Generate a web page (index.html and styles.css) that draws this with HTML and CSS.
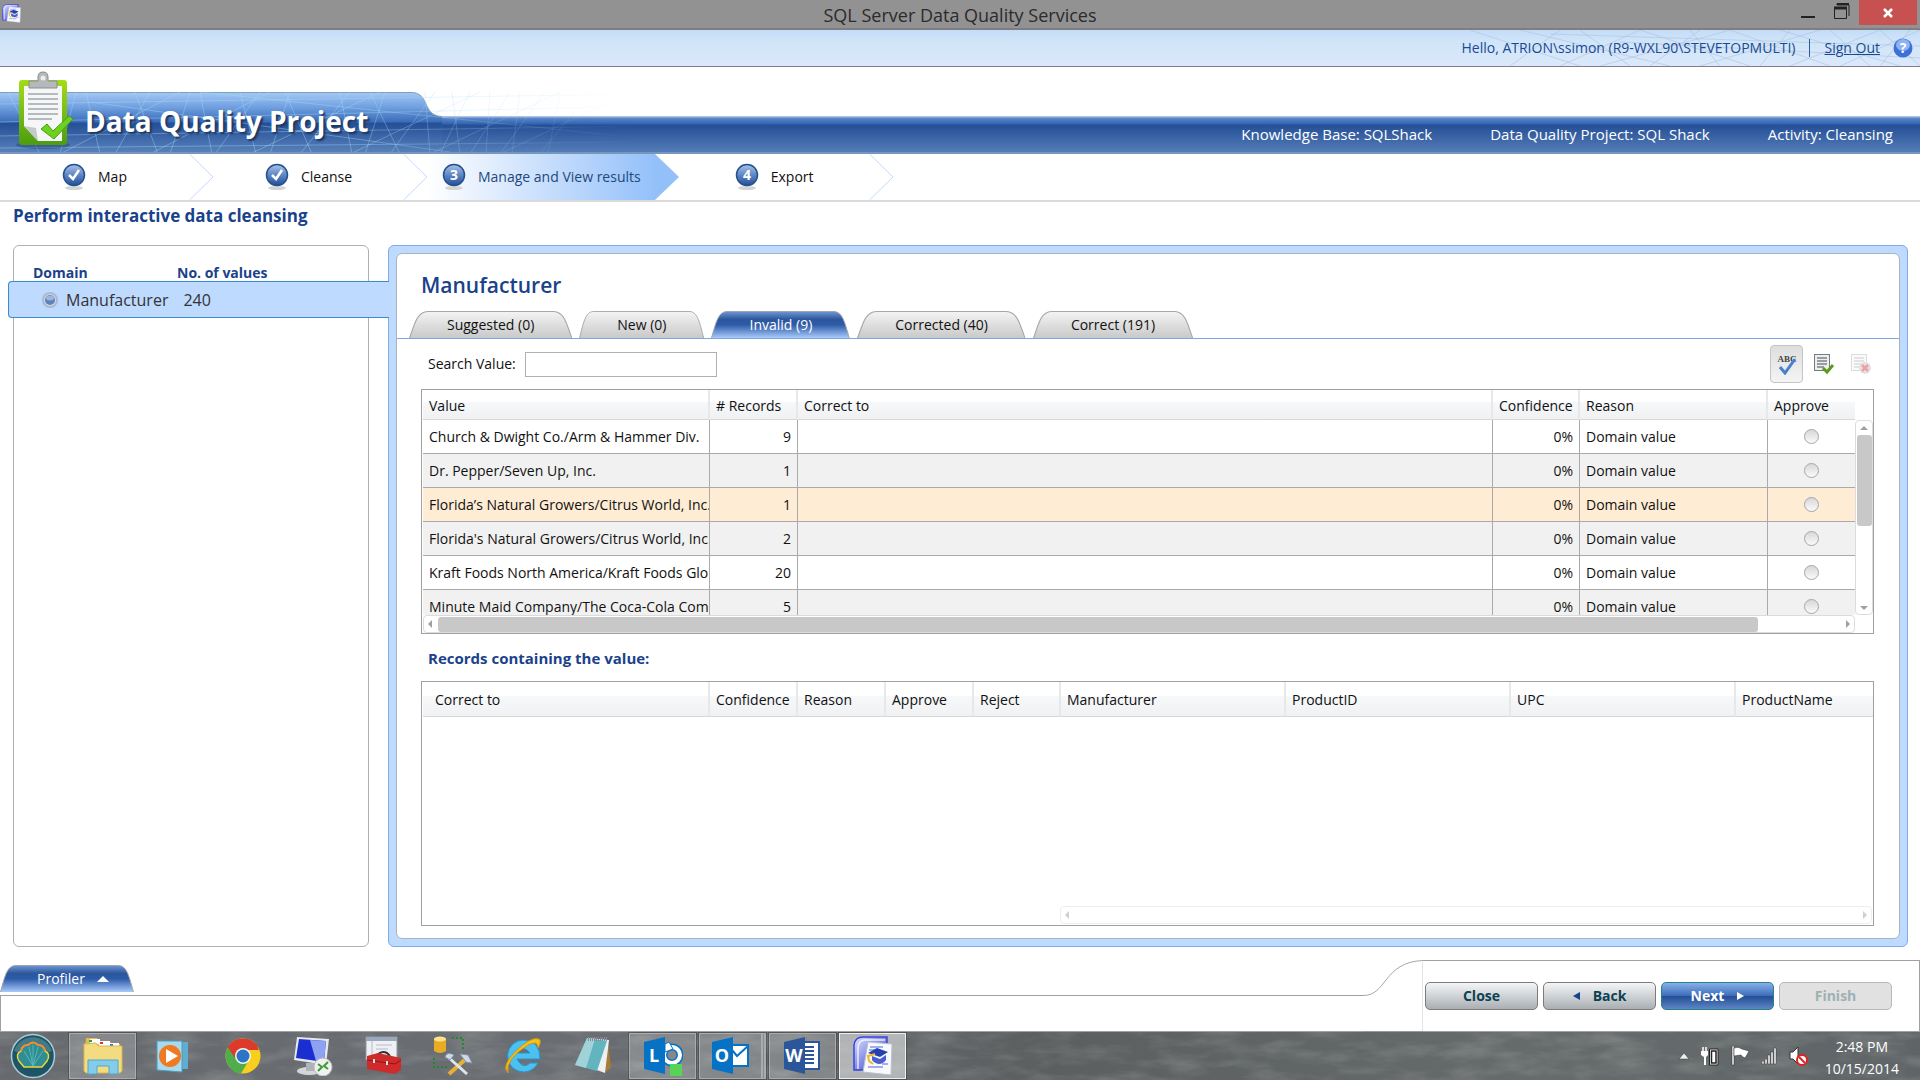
FILE: index.html
```html
<!DOCTYPE html>
<html lang="en">
<head>
  <meta charset="UTF-8" />
  <meta name="viewport" content="width=device-width, initial-scale=1.0"/>
  <title>SQL Server Data Quality Services</title>
  <link rel="stylesheet" href="styles.css">
</head>
<body>
  <!-- shared shapes -->
  <svg class="defs" width="0" height="0" aria-hidden="true">
    <defs>
      <linearGradient id="gGray" x1="0" y1="0" x2="0" y2="1">
        <stop offset="0" stop-color="#f4f4f4"/><stop offset="1" stop-color="#c9c9c9"/>
      </linearGradient>
      <linearGradient id="gBlue" x1="0" y1="0" x2="0" y2="1">
        <stop offset="0" stop-color="#6d96d2"/><stop offset=".3" stop-color="#2c579d"/>
        <stop offset=".5" stop-color="#2d5ba8"/><stop offset="1" stop-color="#a9cbfa"/>
      </linearGradient>
      <linearGradient id="gBall" x1="0" y1="0" x2="0" y2="1">
        <stop offset="0" stop-color="#a9c3e8"/><stop offset=".5" stop-color="#5f86c4"/><stop offset="1" stop-color="#234f97"/>
      </linearGradient>
      <linearGradient id="gBanner" x1="0" y1="0" x2="0" y2="1">
        <stop offset="0" stop-color="#a3c8f5"/><stop offset=".25" stop-color="#6f9fdf"/><stop offset=".49" stop-color="#3c6db9"/>
        <stop offset=".52" stop-color="#254f96"/><stop offset="1" stop-color="#5780bb"/>
      </linearGradient>
      <linearGradient id="gFolder" x1="0" y1="0" x2="1" y2="1">
        <stop offset="0" stop-color="#dfe4ff"/><stop offset="1" stop-color="#2733cc"/>
      </linearGradient>
      <linearGradient id="gFade"><stop offset=".55" stop-color="#fff"/><stop offset="1" stop-color="#000"/></linearGradient>
      <symbol id="tabGray" viewBox="0 0 140 27" preserveAspectRatio="none">
        <path d="M.5 27C5 12 7 1 16 .5H124C133 1 135 12 139.500 27" fill="url(#gGray)" stroke="#a8a8a8"/>
      </symbol>
      <symbol id="tabBlue" viewBox="0 0 140 27" preserveAspectRatio="none">
        <path d="M.5 27C5 12 7 1 16 .5H124C133 1 135 12 139.500 27" fill="url(#gBlue)" stroke="#a0a4aa"/>
      </symbol>
      <symbol id="ball" viewBox="0 0 24 28">
        <ellipse cx="12" cy="25" rx="9" ry="2" fill="#d4d4d4"/>
        <circle cx="12" cy="12" r="10.500" fill="url(#gBall)" stroke="#24508f" stroke-width="1.500"/>
      </symbol>
      <symbol id="dqs" viewBox="0 0 40 40">
        <path d="M1 34V9Q2 1 10 1H34V34Z" fill="url(#gFolder)" stroke="#3a46dc" stroke-width="1.500"/>
        <path d="M5 33V11Q6 4 12 4H32" fill="none" stroke="#fff" stroke-opacity=".8" stroke-width="1.500"/>
        <path d="M15 6L39 8L38 39L10 36Z" fill="#f8f9fd" stroke="#b8bfd0"/>
        <path d="M17 11H30M16 14H22M15 31H30M29 28H35" stroke="#a3aef0" stroke-width="2"/>
        <path d="M15 17L24 12L35 16L27 21Z" fill="#2540b0"/>
        <path d="M19 20L27 23L33 19V24Q30 28 26 28Q21 27 19 24Z" fill="#4a5ed0"/>
        <path d="M22 18L15 20L16 25L20 28" fill="none" stroke="#f0b429" stroke-width="2"/>
      </symbol>
    </defs>
  </svg>

  <header class="titlebar">
    <svg class="app-icon" width="19" height="19"><use href="#dqs"/></svg>
    <span class="window-title">SQL Server Data Quality Services</span>
    <div class="window-buttons">
      <button class="win-btn" aria-label="Minimize"><svg width="16" height="20"><path d="M1 17H15" stroke="#222" stroke-width="2"/></svg></button>
      <button class="win-btn" aria-label="Restore"><svg width="16" height="20"><path d="M3 3.500V5H15V16" fill="none" stroke="#222" stroke-width="1"/><path d="M3 4H15" stroke="#222" stroke-width="2"/><path d="M.5 7V18.500H12.500V7" fill="none" stroke="#222"/><path d="M0 8H13" stroke="#222" stroke-width="3"/></svg></button>
      <button class="win-btn close" aria-label="Close window"><svg width="12" height="12"><path d="M2 2L10 10M10 2L2 10" stroke="#fff" stroke-width="2.500"/></svg></button>
    </div>
  </header>

  <div class="userbar">
    <svg class="userbar-lines" width="470" height="36" aria-hidden="true">
      <path d="M20 0L130 36M60 36L110 0M70 0L220 36M110 36L190 0M130 0L180 36M150 36L280 0M190 0L300 36M200 36L250 0M240 0L270 36M250 36L370 0M280 0L380 36M310 36L340 0M330 0L450 36M340 36L430 0M380 0L420 36M390 36L470 0M430 0L470 36M430 36L460 0M170 12L470 28M100 4L470 16" stroke="#a9bfdc" stroke-opacity=".55" fill="none"/>
    </svg>
    <span>Hello, ATRION\ssimon (R9-WXL90\STEVETOPMULTI)</span>
    <span class="divider"></span>
    <a href="#">Sign Out</a>
    <svg class="help" width="20" height="20"><circle cx="10" cy="10" r="9.500" fill="#3d6fd6"/><ellipse cx="10" cy="7" rx="7" ry="6" fill="#8fb2f2"/><text x="10" y="15" text-anchor="middle" class="help-mark">?</text></svg>
  </div>

  <div class="banner">
    <svg class="banner-art" width="640" height="62" aria-hidden="true">
      <mask id="fade"><rect width="640" height="62" fill="url(#gFade)"/></mask>
      <path d="M0 .5H412C430 1 422 24 442 24.500V60H0Z" fill="url(#gBanner)"/>
      <path d="M0 .5H412C430 1 422 24 442 24.500" fill="none" stroke="#7ba3b8"/>
      <g mask="url(#fade)" stroke="#a5dcf5" stroke-opacity=".4" fill="none">
        <path d="M0 12L640 2M0 30L640 14M0 44L640 34M0 56L640 50M90 10L450 60M200 0L620 44"/>
        <path d="M8 0L40 62M60 62L76 0M86 0L100 62M115 62L150 0M135 0L158 62M170 62L190 0M200 0L212 62M215 62L260 0M240 0L256 62M270 62L290 0M285 0L312 62M300 62L350 0M340 0L352 62M365 62L385 0M370 0L400 62M390 62L435 0M425 0L430 62M440 62L470 0M452 0L460 62M470 62L510 0M490 0L486 62M500 62L545 0M520 0L512 62M540 62L590 0M560 0L548 62"/>
        <path d="M60 62L180 0M150 62L270 0M250 62L380 0M350 62L480 0M430 62L560 0M500 62L630 0"/>
      </g>
      <path d="M0 61H640" stroke="#7597bd" stroke-width="2"/>
    </svg>
    <div class="banner-title">
      <svg width="62" height="80" viewBox="0 0 62 80" aria-hidden="true">
        <defs><linearGradient id="gClip" x1="0" y1="0" x2="0" y2="1"><stop offset="0" stop-color="#a4dc18"/><stop offset="1" stop-color="#4d9c10"/></linearGradient></defs>
        <ellipse cx="29" cy="74" rx="27" ry="4" fill="#1d3c70" fill-opacity=".4"/>
        <rect x="5" y="9" width="48" height="65" rx="3" fill="url(#gClip)"/>
        <path d="M10 15H48V70H24L10 55Z" fill="#f5f6f7"/><path d="M10 55L22 57L24 70Z" fill="#c4c9cc"/>
        <path d="M14 23H44M14 28H44M14 33H44M14 38H44M14 43H44M14 48H38" stroke="#a0a6ab" stroke-width="1.500"/>
        <path d="M15 17V10H24V6Q24 1 29 1T34 6V10H43V17Z" fill="#b5b9bc" stroke="#888d91"/><circle cx="29" cy="7" r="2.500" fill="#eee"/>
        <path d="M27 58L33 53L39 60L55 45L59 48L40 68Z" fill="#6ed01f" stroke="#46a012"/>
      </svg>
      <h1>Data Quality Project</h1>
    </div>
    <div class="banner-info">
      <span>Knowledge Base: SQLShack</span>
      <span>Data Quality Project: SQL Shack</span>
      <span>Activity: Cleansing</span>
    </div>
  </div>

  <nav class="steps">
    <div class="step"><svg width="24" height="28"><use href="#ball"/><path d="M7 12L11 16L17 7" fill="none" stroke="#fff" stroke-width="2.500"/></svg>Map</div>
    <svg class="chevron" width="25" height="46"><path d="M.5 0L24 23L.5 46" fill="none" stroke="#bfdcff"/></svg>
    <div class="step"><svg width="24" height="28"><use href="#ball"/><path d="M7 12L11 16L17 7" fill="none" stroke="#fff" stroke-width="2.500"/></svg>Cleanse</div>
    <svg class="chevron" width="25" height="46"><path d="M.5 0L24 23L.5 46" fill="none" stroke="#bfdcff"/></svg>
    <div class="step active"><svg width="24" height="28"><use href="#ball"/><text x="12" y="17" text-anchor="middle" class="num">3</text></svg>Manage and View results</div>
    <svg class="chevron" width="25" height="46"><path d="M0 0L24 23L0 46Z" fill="#94c0fa"/></svg>
    <div class="step"><svg width="24" height="28"><use href="#ball"/><text x="12" y="17" text-anchor="middle" class="num">4</text></svg>Export</div>
    <svg class="chevron" width="25" height="46"><path d="M.5 0L24 23L.5 46" fill="none" stroke="#bfdcff"/></svg>
  </nav>

  <main>
    <h2 class="page-heading">Perform interactive data cleansing</h2>
    <div class="workspace">
      <aside class="domains">
        <div class="domain-head"><span>Domain</span><span>No. of values</span></div>
        <div class="domain-row">
          <svg width="18" height="18"><circle cx="9" cy="9" r="8" fill="#a9b9d0"/><circle cx="9" cy="9" r="6" fill="#d3dae6"/><circle cx="9" cy="9" r="5" fill="#5f82bd"/><ellipse cx="9" cy="7" rx="4" ry="2.500" fill="#9eb6dc"/></svg>
          <span>Manufacturer</span><span>240</span>
        </div>
      </aside>

      <section class="detail">
        <div class="detail-inner">
          <h2>Manufacturer</h2>
          <div class="tabs" role="tablist">
            <button class="tab" role="tab"><svg><use href="#tabGray"/></svg><span>Suggested (0)</span></button>
            <button class="tab" role="tab"><svg><use href="#tabGray"/></svg><span>New (0)</span></button>
            <button class="tab selected" role="tab" aria-selected="true"><svg><use href="#tabBlue"/></svg><span>Invalid (9)</span></button>
            <button class="tab" role="tab"><svg><use href="#tabGray"/></svg><span>Corrected (40)</span></button>
            <button class="tab" role="tab"><svg><use href="#tabGray"/></svg><span>Correct (191)</span></button>
          </div>

          <div class="toolbar">
            <label for="search">Search Value:</label>
            <input type="text" id="search" />
            <div class="tools">
              <button class="tool pressed" aria-label="Spell check"><svg width="22" height="22"><text x="11" y="9" text-anchor="middle" class="abc">ABC</text><path d="M4 14L9 20L19 6" fill="none" stroke="#4a7fd0" stroke-width="3"/></svg></button>
              <button class="tool" aria-label="Approve all"><svg width="22" height="22"><rect x="1.500" y="1.500" width="15" height="16" fill="#eceeef" stroke="#777c80"/><path d="M4 5H14M4 8H14M4 11H14M4 14H11" stroke="#7d8287" stroke-width="1.500"/><path d="M10 15L14 19L20 12" fill="none" stroke="#5d9a1e" stroke-width="3"/></svg></button>
              <button class="tool" aria-label="Reject all" disabled><svg width="22" height="22"><rect x="1.500" y="1.500" width="15" height="16" fill="#fafafa" stroke="#ddd"/><path d="M4 5H14M4 8H14M4 11H14M4 14H9" stroke="#ddd" stroke-width="1.500"/><circle cx="15" cy="15" r="6" fill="#e2e2e2"/><path d="M12 12L18 18M18 12L12 18" stroke="#f0a0a0" stroke-width="2.500"/></svg></button>
            </div>
          </div>

          <div class="grid">
            <div class="grid-view">
              <table class="values">
                <colgroup><col class="w-value"><col class="w-small"><col><col class="w-flag"><col class="w-reason"><col class="w-flag"></colgroup>
                <thead>
                  <tr><th>Value</th><th># Records</th><th>Correct to</th><th>Confidence</th><th>Reason</th><th>Approve</th></tr>
                </thead>
                <tbody>
                  <tr><td>Church &amp; Dwight Co./Arm &amp; Hammer Div.</td><td class="num-cell">9</td><td></td><td class="num-cell">0%</td><td>Domain value</td><td class="radio-cell"><input type="radio" name="a1" aria-label="Approve"></td></tr>
                  <tr><td>Dr. Pepper/Seven Up, Inc.</td><td class="num-cell">1</td><td></td><td class="num-cell">0%</td><td>Domain value</td><td class="radio-cell"><input type="radio" name="a2" aria-label="Approve"></td></tr>
                  <tr class="current"><td>Florida’s Natural Growers/Citrus World, Inc.</td><td class="num-cell">1</td><td></td><td class="num-cell">0%</td><td>Domain value</td><td class="radio-cell"><input type="radio" name="a3" aria-label="Approve"></td></tr>
                  <tr><td>Florida's Natural Growers/Citrus World, Inc.</td><td class="num-cell">2</td><td></td><td class="num-cell">0%</td><td>Domain value</td><td class="radio-cell"><input type="radio" name="a4" aria-label="Approve"></td></tr>
                  <tr><td>Kraft Foods North America/Kraft Foods Global</td><td class="num-cell">20</td><td></td><td class="num-cell">0%</td><td>Domain value</td><td class="radio-cell"><input type="radio" name="a5" aria-label="Approve"></td></tr>
                  <tr><td>Minute Maid Company/The Coca-Cola Company</td><td class="num-cell">5</td><td></td><td class="num-cell">0%</td><td>Domain value</td><td class="radio-cell"><input type="radio" name="a6" aria-label="Approve"></td></tr>
                </tbody>
              </table>
            </div>
            <div class="vscroll"><span class="arrow up"></span><span class="thumb"></span><span class="arrow down"></span></div>
            <div class="hscroll"><span class="arrow left"></span><span class="thumb"></span><span class="arrow right"></span></div>
          </div>

          <h3>Records containing the value:</h3>
          <div class="records">
            <table class="values tall">
              <colgroup><col class="w-value"><col class="w-small"><col class="w-small"><col class="w-small"><col class="w-flag"><col class="w-field"><col class="w-field"><col class="w-field"><col></colgroup>
              <thead>
                <tr><th>Correct to</th><th>Confidence</th><th>Reason</th><th>Approve</th><th>Reject</th><th>Manufacturer</th><th>ProductID</th><th>UPC</th><th>ProductName</th></tr>
              </thead>
            </table>
            <div class="hscroll idle"><span class="arrow left"></span><span class="arrow right"></span></div>
          </div>
        </div>
      </section>
    </div>
  </main>

  <footer class="footer">
    <div class="footer-left">
      <button class="tab selected profiler"><svg><use href="#tabBlue"/></svg><span>Profiler</span><span class="tri-up"></span></button>
      <div class="footer-box"></div>
    </div>
    <svg class="footer-curve" width="60" height="72" aria-hidden="true"><path d="M0 35.500C24 36 20 2 60 .5" fill="none" stroke="#a6a6a6"/><path d="M59.500 2V71" stroke="#e4e4e4"/><path d="M0 71.500H60" stroke="#999"/></svg>
    <div class="footer-actions">
      <button class="btn">Close</button>
      <button class="btn"><span class="tri-left"></span>Back</button>
      <button class="btn primary">Next<span class="tri-right"></span></button>
      <button class="btn" disabled>Finish</button>
    </div>
  </footer>

  <div class="taskbar">
    <svg class="water" width="100%" height="100%" aria-hidden="true">
      <filter id="ripples" x="0" y="0" width="100%" height="100%"><feTurbulence type="fractalNoise" baseFrequency=".02 .07" numOctaves="4" seed="4"/><feColorMatrix values="0 0 0 0 .75  0 0 0 0 .75  0 0 0 0 .74  1.600 0 0 0 -.65"/></filter>
      <rect width="100%" height="100%" filter="url(#ripples)"/>
    </svg>
    <div class="apps">
      <button class="app start" aria-label="Start"><svg width="46" height="46"><circle cx="23" cy="23" r="21.500" fill="#1d5566" stroke="#a9ccd6" stroke-width="1.500"/><path d="M4 18A20 20 0 0 1 42 18Q24 26 4 18" fill="#6b9da8" fill-opacity=".5"/><path d="M14 34L9 28Q5 21 11 18Q12 12 18 12Q23 7 28 12Q34 12 35 18Q41 21 37 28L32 34Z" fill="#2f8d93" stroke="#e8d838" stroke-width="1.500"/><path d="M11 18Q12 12 18 12Q23 7 28 12Q34 12 35 18" fill="none" stroke="#f08a30" stroke-width="2"/><path d="M23 33L14 18M23 33L19 14M23 33V12M23 33L28 14M23 33L33 18" stroke="#56b5b8"/></svg></button>
      <button class="app open" aria-label="File Explorer"><svg width="42" height="40"><path d="M4 2H15L17 5H28L29 8H38V12H3Z" fill="#e2bd53"/><path d="M8 3H18V8H8ZM17 5H28V10H17ZM27 7H37V12H27Z" fill="#fff"/><path d="M7 4H10V6H7Z" fill="#2aa148"/><path d="M18 6H21V8H18Z" fill="#d33"/><path d="M28 8H31V11H28Z" fill="#277dc9"/><path d="M2 8L14 7L16 10H40V35L38 37H4L2 35Z" fill="#f3db80" stroke="#d8b650"/><path d="M6 24H36V38H27V30H15V38H6Z" fill="#83cdea" stroke="#4fa6cf"/></svg></button>
      <button class="app" aria-label="Media Player"><svg width="36" height="36"><path d="M6 4H33V31H6Z" fill="#5faed0"/><path d="M2 3H27V34L2 32Z" fill="#a9d9ec" stroke="#4f9cbf"/><circle cx="15" cy="18" r="11" fill="#f07a22"/><path d="M11 11V25L23 18Z" fill="#fff"/></svg></button>
      <button class="app" aria-label="Chrome"><svg width="36" height="36"><circle cx="18" cy="18" r="17.500" fill="#f9cf1e"/><path d="M18 18L2.800 9.300A17.500 17.500 0 0 1 33.200 9.300H18Z" fill="#dc3a2b"/><path d="M18 18L10.400 13.600L2.800 9.300A17.500 17.500 0 0 0 16 35.400L24 22Z" fill="#4eae49"/><path d="M2.800 9.300A17.500 17.500 0 0 1 34 12H18L10 20Z" fill="#dc3a2b"/><circle cx="18" cy="18" r="8" fill="#f2f2f2"/><circle cx="18" cy="18" r="6.500" fill="#2c74c4"/></svg></button>
      <button class="app" aria-label="Remote Desktop"><svg width="42" height="40"><ellipse cx="17" cy="35" rx="12" ry="4" fill="#d4d7da"/><path d="M14 27H22V35H14Z" fill="#aeb3b8"/><path d="M5 1L37 3L34 29L2 24Z" fill="#e7eaed"/><path d="M7 3L34 5L32 26L4 22Z" fill="#1b2fd0"/><path d="M18 4L34 5L32 26L24 25Z" fill="#8ea2f2"/><circle cx="31" cy="31" r="9" fill="#f0f0f0" stroke="#bbb"/><path d="M26 28L30 31L26 35M36 26L32 30L36 33" fill="none" stroke="#3c9b35" stroke-width="2"/></svg></button>
      <button class="app" aria-label="SQL Server tools"><svg width="38" height="40"><path d="M2 1H33V24H2Z" fill="#eef0f4" stroke="#8d96a6"/><path d="M2 1H33V5H2Z" fill="#9ba8bc"/><path d="M8 5V24M12 9H28M12 13H24" stroke="#b3bbc8"/><path d="M12 20Q20 12 26 20" fill="none" stroke="#333" stroke-width="2"/><path d="M3 20L14 17L37 22V34L31 38L3 33Z" fill="#d02b2b"/><path d="M3 24L31 28L37 24" fill="none" stroke="#8f1616"/><path d="M9 23H11V27H9ZM22 25H24V29H22Z" fill="#ddd"/></svg></button>
      <button class="app" aria-label="Configuration"><svg width="42" height="40"><path d="M2 3Q8 -1 14 3V15Q8 19 2 15Z" fill="#e9ab23"/><ellipse cx="8" cy="3" rx="6" ry="2.500" fill="#ffe58a"/><path d="M20 2H31V15M2 22V31H16" fill="none" stroke="#1f8a2a" stroke-width="2" stroke-dasharray="2 2"/><path d="M17 38L36 21" stroke="#e7b132" stroke-width="4"/><path d="M16 21L35 38" stroke="#dfe5ee" stroke-width="3"/><path d="M13 21Q15 15 22 19L18 24ZM28 18L36 19L40 27L34 26Z" fill="#cfd9e8" stroke="#8395b5"/></svg></button>
      <button class="app" aria-label="Internet Explorer"><svg width="40" height="40"><path d="M20 4A16 16 0 1 0 35 27H27Q20 34 14 23H37Q37 4 20 4ZM14 17Q20 8 27 17Z" fill="#4cc0ef" stroke="#2a93cc"/><path d="M5 37Q-2 30 12 16Q28 0 36 3Q39 5 35 12Q35 4 25 9Q2 23 5 37Z" fill="#f5c21c" stroke="#cf9414"/></svg></button>
      <button class="app" aria-label="Notepad"><svg width="40" height="40"><path d="M35 6L38 32L32 36Z" fill="#a97c33"/><path d="M15 2L36 4L32 37L24 34Z" fill="#eef1f2"/><path d="M14 2L34 5L24 35L2 29Z" fill="#62b5bf"/><path d="M14 2L22 3L13 32L2 29Z" fill="#9fd3d8"/><path d="M15 3H35" stroke="#889" stroke-width="4" stroke-dasharray="1 1"/></svg></button>
      <button class="app open" aria-label="Lync"><svg width="40" height="40"><circle cx="29" cy="19" r="8" fill="none" stroke="#0672c6" stroke-width="7"/><circle cx="29" cy="19" r="8" fill="none" stroke="#fff" stroke-width="4"/><path d="M22 8L26 6L30 13L22 16Z" fill="#fff" stroke="#0672c6"/><path d="M1 6L22 1V38L1 33Z" fill="#0672c6"/><text x="11" y="26" text-anchor="middle" class="office">L</text><path d="M27 28H39V40H27Z" fill="#57d357"/></svg></button>
      <button class="app open stacked" aria-label="Outlook"><svg width="40" height="40"><path d="M20 9H37V30H20Z" fill="#fff" stroke="#0672c6" stroke-width="2"/><path d="M21 14L26 20L37 10" fill="none" stroke="#0672c6" stroke-width="2"/><path d="M1 6L22 1V38L1 33Z" fill="#0672c6"/><text x="11" y="26" text-anchor="middle" class="office">O</text></svg></button>
      <button class="app open" aria-label="Word"><svg width="40" height="40"><path d="M20 6H36V33H20Z" fill="#fff" stroke="#2b579a" stroke-width="2"/><path d="M22 11H31M22 15H31M22 19H31M22 23H31M22 27H31" stroke="#2b579a" stroke-width="2"/><path d="M1 6L22 1V38L1 33Z" fill="#2b579a"/><text x="11" y="26" text-anchor="middle" class="office">W</text></svg></button>
      <button class="app open front" aria-label="Data Quality Services"><svg width="40" height="40"><use href="#dqs"/></svg></button>
    </div>
    <div class="tray">
      <svg width="12" height="20"><path d="M1 13L6 7L11 13Z" fill="#eee" stroke="#333" stroke-width=".5"/></svg>
      <svg width="19" height="20"><path d="M2 1V5M5 1V5" stroke="#fff" stroke-width="1.500"/><path d="M0 5H7V9L5 11V19H3V11L0 9Z" fill="#fff"/><path d="M8.500 3H17V19H8.500Z" fill="#fff" stroke="#222"/><path d="M10.500 5H15V17H10.500Z" fill="#fff" stroke="#222" stroke-width="1.500"/></svg>
      <svg width="19" height="20"><path d="M1 0H3V19H1Z" fill="#fff" stroke="#222" stroke-width=".5"/><path d="M3 2Q7 0 11 3L18 5Q16 9 14 12Q11 11 10 9L3 10Z" fill="#fff" stroke="#222" stroke-width=".5"/></svg>
      <svg width="17" height="20"><path d="M1 18V15H3V18ZM4 18V13H6V18ZM7 18V9H9V18ZM10 18V6H12V18ZM13 18V2H15V18Z" fill="#fff" stroke="#333" stroke-width=".5"/></svg>
      <svg width="19" height="20"><path d="M1 6H4L9 1V18L4 13H1Z" fill="#fff" stroke="#333"/><circle cx="13" cy="14" r="5" fill="#fff" stroke="#d22" stroke-width="2"/><path d="M10 11L16 17" stroke="#d22" stroke-width="2"/></svg>
      <div class="clock"><span>2:48 PM</span><span>10/15/2014</span></div>
    </div>
  </div>
</body>
</html>
```
FILE: styles.css
```css
* { box-sizing: border-box; }
body {
  margin: 0;
  min-height: 100vh;
  display: flex;
  flex-direction: column;
  font-family: "Open Sans", "Noto Sans", sans-serif;
  font-size: 14px;
  line-height: 20px;
  color: #111;
  background: #fff;
}
h1, h2, h3 { margin: 0; }
button, input { font: inherit; }
button { padding: 0; border: none; background: none; color: inherit; }
.defs { position: absolute; }

/* window title */
.titlebar {
  display: grid;
  grid-template-columns: 1fr auto 1fr;
  height: 30px;
  background: #929292;
  border-bottom: 2px solid #7f7f7f;
}
.app-icon { margin: 4px 2px; }
.window-title {
  font-size: 18px;
  line-height: 30px;
  color: #2b2b2b;
}
.window-buttons {
  display: flex;
  justify-content: flex-end;
  align-items: flex-start;
  gap: 18px;
  padding-right: 3px;
}
.win-btn { display: flex; align-items: center; justify-content: center; }
.win-btn.close {
  width: 58px;
  height: 25px;
  margin-left: -9px;
  background: #c75050;
}

.userbar {
  position: relative;
  display: flex;
  justify-content: flex-end;
  align-items: center;
  height: 37px;
  padding-right: 7px;
  color: #1a4a94;
  background: linear-gradient(#c4dcfa, #d0e5f8 30%, #dbe8fb);
  border-bottom: 1px solid #808080;
}
.userbar-lines { position: absolute; right: 0; top: 0; }
.userbar > span, .userbar > a, .help { position: relative; }
.userbar a { color: #1a4a94; }
.divider {
  width: 1px;
  height: 18px;
  margin: 0 14px;
  background: #2c5aa0;
}
.help { margin-left: 13px; }
.help-mark { font: bold 14px "Open Sans", sans-serif; fill: #fff; }

/* banner */
.banner {
  position: relative;
  display: flex;
  justify-content: space-between;
  align-items: flex-end;
  height: 87px;
  background: linear-gradient(#a9c3e4 1px, #5a87cb 2px, #3463b0 8px, #254f96 9px, #547cb8 36px, #7597bd 36px) bottom / 100% 38px no-repeat;
}
.banner-art { position: absolute; left: 0; bottom: 0; }
.banner-title {
  position: relative;
  display: flex;
  align-items: center;
  gap: 9px;
  height: 86px;
  padding-left: 14px;
}
.banner h1 {
  padding-top: 20px;
  font-size: 28px;
  line-height: 34px;
  color: #fff;
  text-shadow: 2px 2px 2px #1b3560;
}
.banner-info {
  display: flex;
  gap: 58px;
  height: 38px;
  padding-right: 27px;
  font-size: 15px;
  line-height: 36px;
  color: #fff;
}

/* wizard steps */
.steps {
  display: flex;
  height: 48px;
  border-bottom: 2px solid #dadada;
}
.step {
  display: flex;
  align-items: center;
  justify-content: center;
  gap: 12px;
  min-width: 189px;
  padding: 0 14px;
}
.step.active {
  color: #1c4a7c;
  background: linear-gradient(90deg, #fff, #94c0fa);
}
.num { font: bold 14px "Open Sans", sans-serif; fill: #fff; }

/* main area */
main {
  flex: 1;
  display: flex;
  flex-direction: column;
  padding: 0 12px 13px 13px;
}
.page-heading {
  padding: 1px 0 17px;
  font-size: 17px;
  line-height: 25px;
  color: #1a428a;
}
.workspace {
  flex: 1;
  display: flex;
  gap: 19px;
}
.domains {
  width: 356px;
  padding-top: 17px;
  border: 1px solid #b0b0b0;
  border-radius: 6px;
}
.domain-head {
  display: grid;
  grid-template-columns: 144px 1fr;
  padding-left: 19px;
  font-weight: bold;
  color: #1a428a;
}
.domain-row {
  position: relative;
  display: flex;
  align-items: center;
  height: 37px;
  margin: -2px -21px 0 -6px;
  padding-left: 32px;
  font-size: 16px;
  color: #333;
  background: #bedaff;
  border: 1px solid #3b8bc8;
  border-right: none;
  border-radius: 4px 0 0 4px;
}
.domain-row svg { margin-right: 7px; }
.domain-row span + span { margin-left: 15px; }
.detail {
  flex: 1;
  display: flex;
  min-width: 0;
  padding: 7px;
  background: #bedaff;
  border: 1px solid #7fabe9;
  border-radius: 6px;
}
.detail-inner {
  flex: 1;
  min-width: 0;
  display: flex;
  flex-direction: column;
  padding-bottom: 12px;
  background: #fff;
  border: 1px solid #a9b2bf;
  border-radius: 6px;
}
.detail h2 {
  padding: 17px 24px 11px;
  font-size: 21px;
  font-weight: 600;
  line-height: 29px;
  color: #1a428a;
}

.tabs {
  display: flex;
  gap: 7px;
  padding-left: 12px;
  border-bottom: 1px solid #7fa6e6;
}
.tab {
  position: relative;
  height: 27px;
  padding: 1px 38px 0;
}
.tab svg { position: absolute; left: 0; top: 0; width: 100%; height: 100%; }
.tab span { position: relative; }
.tab.selected { color: #fff; }

.toolbar {
  display: flex;
  align-items: center;
  height: 50px;
  padding: 0 22px 0 31px;
}
.toolbar input {
  width: 192px;
  height: 25px;
  margin-left: 9px;
  border: 1px solid #b0b0b0;
}
.tools { display: flex; gap: 4px; margin-left: auto; }
.tool {
  display: flex;
  align-items: center;
  justify-content: center;
  width: 33px;
  height: 38px;
}
.tool.pressed {
  background: linear-gradient(#dedede, #f4f4f4);
  border: 1px solid #c4c4c4;
  border-radius: 4px;
}
.abc { font: bold 9px "Liberation Serif", serif; fill: #444; }

/* tables */
.grid {
  display: grid;
  grid-template-columns: 1fr 18px;
  grid-template-rows: 225px 18px;
  margin: 0 25px 0 24px;
  padding-left: 1px;
  border: 1px solid #a0a0a0;
}
.grid-view { overflow: hidden; }
.values {
  width: 100%;
  table-layout: fixed;
  border-collapse: separate;
  border-spacing: 0;
}
.w-value { width: 287px; }
.w-small { width: 88px; }
.w-flag { width: 87px; }
.w-reason { width: 188px; }
.w-field { width: 225px; }
.values th, .values td {
  padding: 0 6px;
  text-align: left;
  font-weight: normal;
  white-space: nowrap;
  overflow: hidden;
}
.values th {
  height: 30px;
  padding-top: 2px;
  background: linear-gradient(#fff 40%, #f6f8fa 42%, #eff1f3);
  border-right: 2px solid #e6e8ea;
  border-bottom: 1px solid #d5d7d9;
}
.values th:last-child { border-right: none; }
.tall th { height: 35px; }
.tall th:first-child { padding-left: 12px; }
.values td {
  height: 34px;
  padding-right: 0;
  border-right: 1px solid #aaa;
  border-bottom: 1px solid #aaa;
}
.values td:last-child { border-right: none; }
.values tr:nth-child(even) td { background: #f1f1f1; }
.values tr.current td { background: #ffecd4; }
.values .num-cell { padding-right: 6px; text-align: right; }
.values .radio-cell { padding: 0; text-align: center; }
input[type="radio"] {
  appearance: none;
  display: block;
  width: 15px;
  height: 15px;
  margin: 0 auto;
  border: 1px solid #a6a6a6;
  border-radius: 50%;
  background: linear-gradient(#d8d8d8, #fafafa);
}

.vscroll, .hscroll {
  display: flex;
  align-items: center;
  border: 1px solid #dcdcdc;
  border-radius: 4px;
}
.vscroll { flex-direction: column; margin-top: 30px; }
.thumb { background: #c8c8c8; border-radius: 3px; }
.vscroll .thumb { width: 15px; height: 91px; margin-top: 5px; }
.hscroll .thumb { flex: 1; height: 15px; margin: 0 88px 0 6px; }
.arrow { border: 4px solid transparent; }
.up { margin-top: 1px; border-bottom-color: #a0a0a0; }
.down { margin-top: auto; border-top-color: #a0a0a0; }
.left { border-right-color: #a0a0a0; }
.right { margin-left: auto; border-left-color: #a0a0a0; }
.idle { height: 18px; margin: auto 1px 1px 637px; opacity: .5; }

.detail h3 {
  padding: 14px 31px 13px;
  font-size: 15px;
  line-height: 20px;
  color: #1a428a;
}
.records {
  flex: 1;
  display: flex;
  flex-direction: column;
  margin: 0 25px 0 24px;
  padding-left: 1px;
  border: 1px solid #a0a0a0;
}

/* wizard footer */
.footer { display: flex; height: 72px; }
.footer-left {
  flex: 1;
  display: flex;
  flex-direction: column;
  align-items: flex-start;
  padding-top: 5px;
}
.profiler {
  display: flex;
  align-items: center;
  gap: 12px;
  padding: 0 25px 0 37px;
  margin-bottom: 3px;
}
.tri-up { border: 6px solid transparent; border-bottom-color: #fff; border-top: none; }
.footer-box {
  flex: 1;
  align-self: stretch;
  border: 1px solid #a0a0a0;
  border-right: none;
}
.footer-actions {
  display: flex;
  align-items: center;
  gap: 5px;
  padding: 0 27px 0 2px;
  border: 1px solid #a0a0a0;
  border-left: none;
}
.btn {
  display: flex;
  align-items: center;
  justify-content: center;
  width: 113px;
  height: 28px;
  font-weight: bold;
  color: #0c4252;
  background: linear-gradient(#f4f5f6, #c8cccf 60%, #a9aeb2);
  border: 1px solid #7c7c7c;
  border-radius: 5px;
}
.btn.primary {
  color: #fff;
  background: linear-gradient(#86b0ea, #3f6fba 48%, #254f96 52%, #5d86c4);
  border-color: #28808c;
}
.btn:disabled {
  color: #9fb0b5;
  background: #e1e1e1;
  border-color: #b8b8b8;
}
.tri-left, .tri-right { border: 4px solid transparent; }
.tri-left { margin-right: 13px; border-right: 7px solid #1a428a; border-left: none; }
.tri-right { margin-left: 13px; border-left: 7px solid #fff; border-right: none; }

/* taskbar */
.taskbar {
  position: relative;
  display: flex;
  justify-content: space-between;
  height: 48px;
  background: linear-gradient(90deg, #66696d, #6a6e72 30%, #5b5f60 55%, #666b6c 80%, #5f6567);
}
.water { position: absolute; left: 0; top: 0; opacity: .25; }
.apps, .tray { position: relative; display: flex; align-items: center; }
.apps { gap: 3px; }
.app {
  display: flex;
  align-items: center;
  justify-content: center;
  width: 67px;
  height: 46px;
}
.app.start { width: 66px; }
.app.open {
  background: rgba(255, 255, 255, .2);
  border: 1px solid #a9abac;
  outline: 1px solid rgba(0, 0, 0, .2);
}
.app.stacked { border-right: 5px double #a9abac; }
.app.front { background: rgba(255, 255, 255, .5); border-color: #eee; }
.office { font: bold 18px "Open Sans", sans-serif; fill: #fff; }
.tray { gap: 11px; padding-right: 21px; }
.clock {
  display: flex;
  flex-direction: column;
  align-items: center;
  margin-left: 6px;
  padding-top: 3px;
  line-height: 22px;
  color: #fff;
}
```
